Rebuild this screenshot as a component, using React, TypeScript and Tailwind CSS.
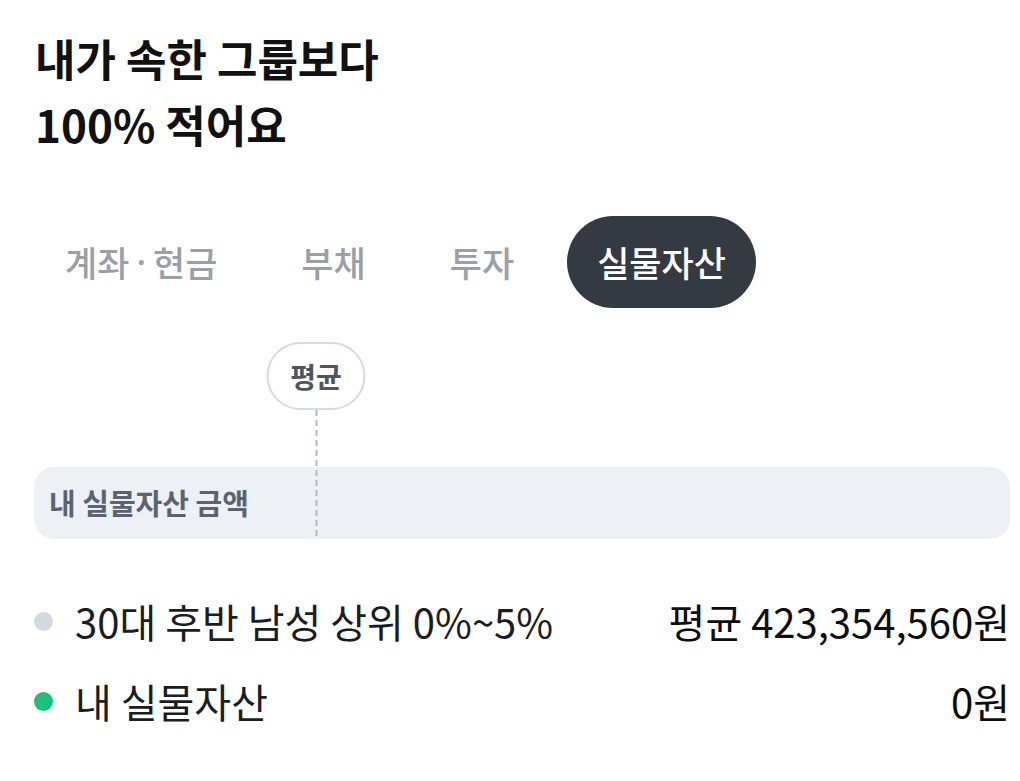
import React from 'react';

const tabs = ['계좌·현금', '부채', '투자', '실물자산'];

const legend = [
  { color: 'bg-[#d3dae2]', label: '30대 후반 남성 상위 0%~5%', value: '평균 423,354,560원' },
  { color: 'bg-[#1dbf7d]', label: '내 실물자산', value: '0원' },
];

const TabLabel: React.FC<{ text: string }> = ({ text }) => {
  const parts = text.split('·');
  if (parts.length < 2) return <>{text}</>;
  return (
    <>
      {parts[0]}
      <span className="mx-[7px]" style={{ fontFamily: '"Noto Sans", sans-serif' }}>
        ·
      </span>
      {parts[1]}
    </>
  );
};

const App: React.FC = () => {
  const active = 3;
  const avgPercent = 28.9;

  return (
    <div
      className="min-h-screen bg-white pl-[34px] pr-[10px] pt-[25px]"
      style={{ fontFamily: '"Noto Sans CJK KR", "Noto Sans", sans-serif' }}
    >
      <h1 className="text-[44px] font-bold leading-[66px] text-[#111111] pl-[1px]">
        내가 속한 그룹보다
        <br />
        100% 적어요
      </h1>

      <div className="mt-[59px] flex items-center gap-[22px]">
        {tabs.map((t, i) => (
          <div
            key={t}
            className={
              i === active
                ? 'h-[92px] px-[30px] flex items-center rounded-full bg-[#333a42] text-white text-[35px] font-medium'
                : 'h-[92px] px-[31px] flex items-center rounded-full text-[#9aa0a8] text-[35px] font-medium'
            }
          >
            <TabLabel text={t} />
          </div>
        ))}
      </div>

      <div className="relative mt-[159px]">
        <div className="h-[72px] rounded-[20px] bg-[#edf1f5] flex items-center pl-[15px] text-[29px] font-bold text-[#5b6370]">
          내 실물자산 금액
        </div>
        <div
          className="absolute bottom-[1px] flex flex-col items-center -translate-x-1/2"
          style={{ left: `${avgPercent}%` }}
        >
          <div className="h-[68px] w-[99px] rounded-full border-2 border-[#d7dbe0] bg-white flex items-center justify-center text-[28px] font-bold text-[#4e5661]">
            평균
          </div>
          <div className="h-[128px] w-[2px] bg-[repeating-linear-gradient(to_bottom,#b3b9c0_0px,#b3b9c0_6px,transparent_6px,transparent_10px)]" />
        </div>
      </div>

      <div className="mt-[46px] flex flex-col gap-[8px]">
        {legend.map((row) => (
          <div key={row.label} className="h-[72px] flex items-center justify-between">
            <div className="flex items-center">
              <span className={`h-[19px] w-[19px] rounded-full ${row.color}`} />
              <span className="ml-[22px] text-[40px] text-[#1a1d21]">{row.label}</span>
            </div>
            <span className="text-[40px] font-normal text-[#0d0d0d]">{row.value}</span>
          </div>
        ))}
      </div>
    </div>
  );
};

export default App;
